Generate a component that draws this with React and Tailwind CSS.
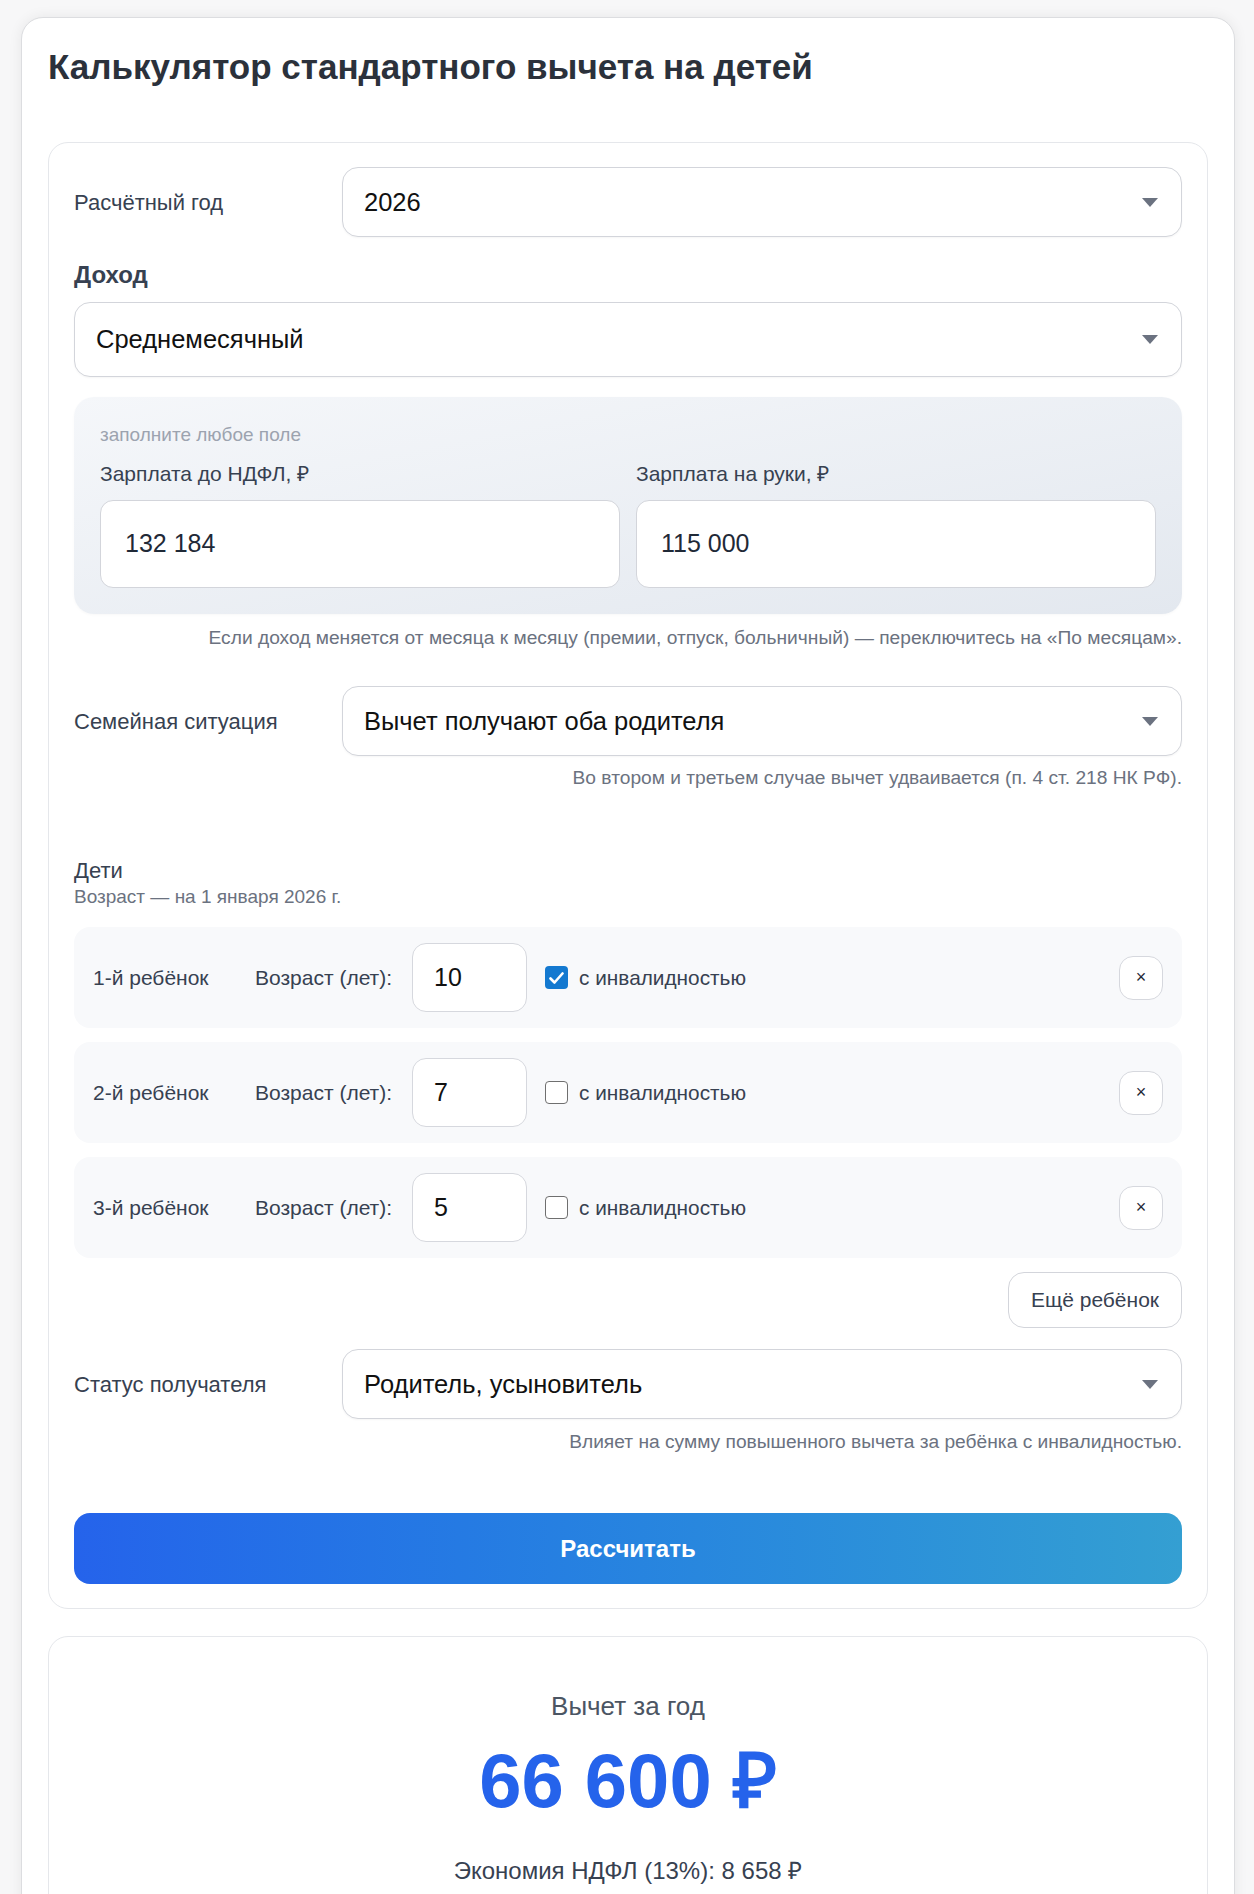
import React from 'react';

const Arrow = () => (
  <svg width="16" height="9" viewBox="0 0 16 9" className="shrink-0">
    <path d="M0 0h16L8 9z" fill="#6b7280" />
  </svg>
);

const Select = ({ value, tall }) => (
  <div
    className={`flex-1 flex items-center justify-between bg-white border border-[#d3d5db] rounded-[16px] pl-[21px] pr-[23px] shadow-[0_1px_2px_rgba(0,0,0,0.04)] ${
      tall ? 'h-[75px]' : 'h-[70px]'
    }`}
  >
    <span className="text-[25.5px] text-[#111111]">{value}</span>
    <Arrow />
  </div>
);

const FieldRow = ({ label, value }) => (
  <div className="flex items-center">
    <div className="w-[268px] shrink-0 text-[22px] text-[#374151]">{label}</div>
    <Select value={value} />
  </div>
);

const Hint = ({ children, className = '' }) => (
  <p className={`text-right text-[19.2px] leading-[24px] text-[#6b7280] ${className}`}>{children}</p>
);

const children = [
  { n: '1-й ребёнок', age: '10', disabled: true },
  { n: '2-й ребёнок', age: '7', disabled: false },
  { n: '3-й ребёнок', age: '5', disabled: false },
];

const ChildRow = ({ item }) => (
  <div className="flex items-center h-[101px] bg-[#f8f9fb] rounded-[16px] pl-[19px] pr-[19px] text-[21px] text-[#374151]">
    <span className="w-[162px] shrink-0">{item.n}</span>
    <span>Возраст (лет):</span>
    <div className="ml-[20px] w-[115px] h-[69px] bg-white border border-[#d6d8de] rounded-[14px] flex items-center pl-[21px] text-[25px] text-[#111111]">
      {item.age}
    </div>
    <label className="ml-[18px] flex items-center gap-[11px]">
      {item.disabled ? (
        <span className="w-[23px] h-[23px] rounded-[4px] bg-[#1479d0] flex items-center justify-center">
          <svg width="15" height="12" viewBox="0 0 15 12">
            <path d="M1.5 6.5l4 4L13.5 1.5" fill="none" stroke="#fff" strokeWidth="2.6" strokeLinecap="round" strokeLinejoin="round" />
          </svg>
        </span>
      ) : (
        <span className="w-[23px] h-[23px] rounded-[4px] bg-white border-[1.5px] border-[#6f6f6f]" />
      )}
      <span className="text-[20.8px]">с инвалидностью</span>
    </label>
    <button className="ml-auto w-[44px] h-[44px] rounded-[14px] bg-white border border-[#d6d8de] flex items-center justify-center text-[18px] text-[#1f2937]">
      ×
    </button>
  </div>
);

export default function App() {
  return (
    <div className="min-h-screen bg-[#f7f7f8] pt-[17px] px-[19px] pl-[21px] font-['Liberation_Sans',Arial,sans-serif]">
      <div className="bg-white border border-[#dcdde0] rounded-[22px] shadow-[0_0_14px_rgba(0,0,0,0.07)] px-[26px] pt-[28px] pb-[40px]">
        <h1 className="text-[35px] leading-[41px] font-bold text-[#2b313b]">
          Калькулятор стандартного вычета на детей
        </h1>

        <div className="mt-[55px] border border-[#e5e7eb] rounded-[20px] px-[25px] pt-[24px] pb-[24px]">
          <FieldRow label="Расчётный год" value="2026" />

          <div className="mt-[25px] text-[24px] leading-[26px] font-bold text-[#374151]">Доход</div>
          <div className="mt-[14px] flex">
            <Select value="Среднемесячный" tall />
          </div>

          <div className="mt-[20px] rounded-[20px] bg-gradient-to-br from-[#f5f7fa] to-[#e3e8ef] px-[26px] pt-[26px] pb-[26px] shadow-[0_1px_3px_rgba(0,0,0,0.03)]">
            <div className="text-[19px] leading-[24px] text-[#9ca3af]">заполните любое поле</div>
            <div className="mt-[14px] grid grid-cols-2 gap-[16px]">
              {[
                ['Зарплата до НДФЛ, ₽', '132 184'],
                ['Зарплата на руки, ₽', '115 000'],
              ].map(([l, v]) => (
                <div key={l}>
                  <div className="text-[21px] leading-[26px] text-[#374151]">{l}</div>
                  <div className="mt-[13px] h-[88px] bg-white border border-[#d3d5db] rounded-[13px] flex items-center pl-[24px] text-[25px] text-[#1f2937]">
                    {v}
                  </div>
                </div>
              ))}
            </div>
          </div>

          <Hint className="mt-[12px]">
            Если доход меняется от месяца к месяцу (премии, отпуск, больничный) — переключитесь на «По месяцам».
          </Hint>

          <div className="mt-[36px]">
            <FieldRow label="Семейная ситуация" value="Вычет получают оба родителя" />
          </div>
          <Hint className="mt-[10px]">Во втором и третьем случае вычет удваивается (п. 4 ст. 218 НК РФ).</Hint>

          <div className="mt-[68px] text-[22px] leading-[26px] text-[#374151]">Дети</div>
          <div className="mt-[2px] text-[19px] leading-[22px] text-[#6b7280]">Возраст — на 1 января 2026 г.</div>

          <div className="mt-[19px] flex flex-col gap-[14px]">
            {children.map((c) => (
              <ChildRow key={c.n} item={c} />
            ))}
          </div>

          <div className="mt-[14px] flex justify-end">
            <button className="h-[56px] px-[22px] bg-white border border-[#d3d5db] rounded-[16px] text-[21px] text-[#374151]">
              Ещё ребёнок
            </button>
          </div>

          <div className="mt-[21px]">
            <FieldRow label="Статус получателя" value="Родитель, усыновитель" />
          </div>
          <Hint className="mt-[11px]">Влияет на сумму повышенного вычета за ребёнка с инвалидностью.</Hint>

          <button className="mt-[59px] w-full h-[71px] rounded-[16px] bg-gradient-to-r from-[#2563eb] to-[#349fd2] text-white text-[24px] font-bold">
            Рассчитать
          </button>
        </div>

        <div className="mt-[27px] border border-[#e5e7eb] rounded-[20px] pt-[53px] pb-[40px] flex flex-col items-center">
          <div className="text-[26px] leading-[32px] text-[#4b5563]">Вычет за год</div>
          <div className="mt-[16px] text-[76px] leading-[86px] font-bold text-[#2563eb]">66 600 ₽</div>
          <div className="mt-[32px] text-[24px] leading-[30px] text-[#374151]">Экономия НДФЛ (13%): 8 658 ₽</div>
        </div>
      </div>
    </div>
  );
}
